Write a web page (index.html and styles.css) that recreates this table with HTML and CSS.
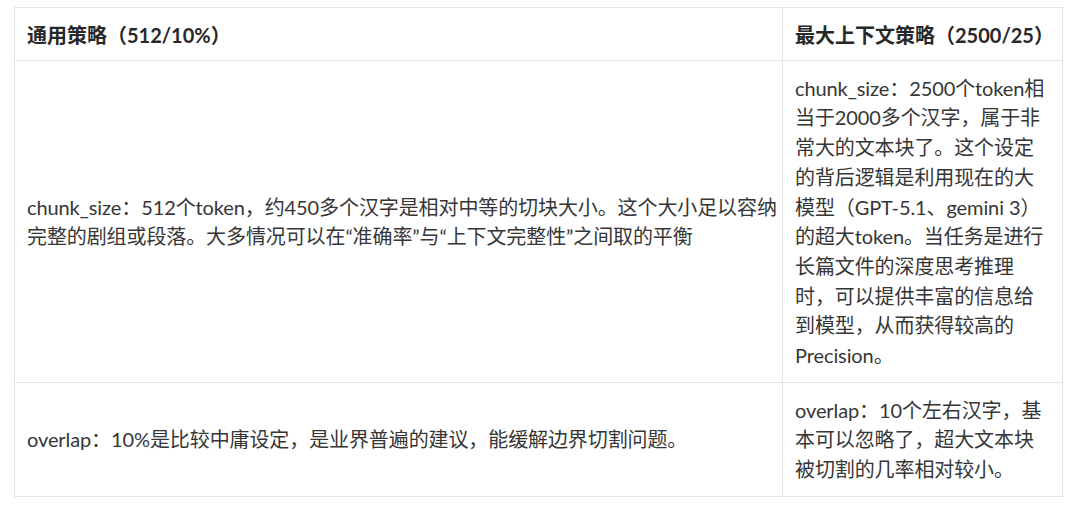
FILE: index.html
```html
<!DOCTYPE html>
<html lang="zh-CN">
<head>
<meta charset="utf-8">
<title>策略对比</title>
<link rel="stylesheet" href="styles.css">
</head>
<body>
<table class="cmp">
  <colgroup>
    <col class="col-a">
    <col class="col-b">
  </colgroup>
  <thead>
    <tr>
      <th>通用策略（512/10%）</th>
      <th>最大上下文策略（2500/25）</th>
    </tr>
  </thead>
  <tbody>
    <tr>
      <td class="cell-a">chunk_size：512个token，约450多个汉字是相对中等的切块大小。这个大小足以容纳完整的剧组或段落。大多情况可以在“准确率”与“上下文完整性”之间取的平衡</td>
      <td>chunk_size：2500个token相当于2000多个汉字，属于非常大的文本块了。这个设定的背后逻辑是利用现在的大模型（GPT-5.1、gemini 3）的超大token。当任务是进行长篇文件的深度思考推理时，可以提供丰富的信息给到模型，从而获得较高的Precision。</td>
    </tr>
    <tr>
      <td class="cell-a">overlap：10%是比较中庸设定，是业界普遍的建议，能缓解边界切割问题。</td>
      <td>overlap：10个左右汉字，基本可以忽略了，超大文本块被切割的几率相对较小。</td>
    </tr>
  </tbody>
</table>
</body>
</html>
```

FILE: styles.css
```css
html, body {
  margin: 0;
  padding: 0;
  background: #ffffff;
}

body {
  padding: 7px 0 0 14px;
  font-family: "Lato", "Noto Sans CJK SC", sans-serif;
  font-size: 20px;
  color: #363636;
}

.cmp {
  border-collapse: collapse;
  width: 1048px;
  table-layout: fixed;
}

.col-a { width: 768px; }
.col-b { width: 280px; }

.cmp th,
.cmp td {
  border: 1px solid #e6e6e6;
  line-height: 29.7px;
  text-align: left;
  vertical-align: middle;
}

.cmp td {
  padding: 13px 12px 11px 12px;
  letter-spacing: -0.1px;
}

.cmp td.cell-a {
  padding-right: 0;
}

.cmp th {
  font-weight: 700;
  color: #282828;
  padding: 13px 12px 9px 12px;
}
```
